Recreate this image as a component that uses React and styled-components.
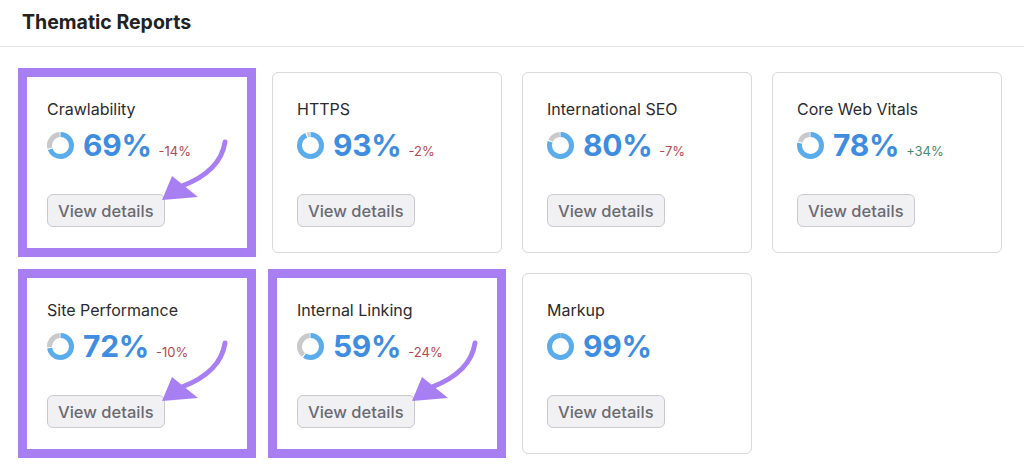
import React from 'react';
import styled, { createGlobalStyle } from 'styled-components';

const GlobalStyle = createGlobalStyle`
  body {
    margin: 0;
    background: #fff;
    font-family: Inter, "Noto Sans", "Liberation Sans", sans-serif;
  }
`;

const Page = styled.div`
  width: 1024px;
  height: 473px;
  overflow: hidden;
  background: #fff;
`;

const Header = styled.div`
  height: 46px;
  display: flex;
  align-items: center;
  padding: 0 22px;
  border-bottom: 1px solid #e3e3e6;
`;

const Title = styled.h1`
  margin: 0;
  margin-top: -2px;
  font-size: 19.5px;
  font-weight: 700;
  color: #222;
`;

const Grid = styled.div`
  display: grid;
  grid-template-columns: repeat(4, 230px);
  grid-auto-rows: 181px;
  gap: 20px;
  padding: 25px 22px 0;
`;

const Card = styled.div`
  position: relative;
  box-sizing: border-box;
  border: 1px solid #d9d9de;
  border-radius: ${p => (p.$highlight ? '0' : '6px')};
  padding: 26px 24px 24px;
  display: flex;
  flex-direction: column;
  align-items: flex-start;
  background: #fff;
  ${p => p.$highlight && `
    border-color: #a87ff2;
    outline: 9px solid #a87ff2;
    outline-offset: -5px;
  `}
`;

const CardTitle = styled.div`
  font-size: 16px;
  line-height: 20px;
  color: #2b2b2f;
`;

const ScoreRow = styled.div`
  display: flex;
  align-items: baseline;
  margin-top: 8px;
  height: 36px;
`;

const Donut = styled.svg`
  flex: none;
  align-self: center;
  margin-right: 9px;
`;

const Score = styled.span`
  font-size: 30px;
  line-height: 36px;
  font-weight: 700;
  color: #3e8de0;
  letter-spacing: -0.3px;
`;

const Change = styled.span`
  margin-left: 7px;
  font-size: 13px;
  color: ${p => (p.$up ? '#4b8a6f' : '#b9474f')};
`;

const DetailsButton = styled.button`
  margin-top: 31px;
  height: 33px;
  padding: 0 10px;
  border: 1px solid #cacad0;
  border-radius: 6px;
  background: #f1f1f4;
  color: #6a6a72;
  font-family: inherit;
  font-size: 16.5px;
  font-weight: 500;
  cursor: pointer;
`;

const Arrow = styled.svg`
  position: absolute;
  left: -1px;
  top: -1px;
  overflow: visible;
  pointer-events: none;
`;

const ScoreDonut = ({ value }) => {
  const r = 11;
  const c = 2 * Math.PI * r;
  const gap = 1.2;
  const blue = (value / 100) * c;
  return (
    <Donut width="27" height="27" viewBox="0 0 27 27">
      <g transform="rotate(-90 13.5 13.5)">
        <circle
          cx="13.5" cy="13.5" r={r} fill="none" stroke="#c9c9cc" strokeWidth="5"
          strokeDasharray={`${Math.max(c - blue - gap * 2, 0.5)} ${c}`}
          strokeDashoffset={-(blue + gap)}
        />
        <circle
          cx="13.5" cy="13.5" r={r} fill="none" stroke="#5aadea" strokeWidth="5"
          strokeDasharray={`${blue} ${c}`}
        />
      </g>
    </Donut>
  );
};

const PointerArrow = () => (
  <Arrow width="230" height="181" viewBox="0 0 230 181">
    <path d="M203 70 C200 90 186 104 160 114" fill="none" stroke="#a87ff2" strokeWidth="5" strokeLinecap="round" />
    <polygon points="140,128 150,104 176,125" fill="#a87ff2" />
  </Arrow>
);

const reports = [
  { id: 1, name: 'Crawlability', score: 69, change: '-14%', highlight: true },
  { id: 2, name: 'HTTPS', score: 93, change: '-2%' },
  { id: 3, name: 'International SEO', score: 80, change: '-7%' },
  { id: 4, name: 'Core Web Vitals', score: 78, change: '+34%', up: true },
  { id: 5, name: 'Site Performance', score: 72, change: '-10%', highlight: true },
  { id: 6, name: 'Internal Linking', score: 59, change: '-24%', highlight: true },
  { id: 7, name: 'Markup', score: 99 },
];

const App = () => (
  <Page>
    <GlobalStyle />
    <Header>
      <Title>Thematic Reports</Title>
    </Header>
    <Grid>
      {reports.map(r => (
        <Card key={r.id} $highlight={r.highlight}>
          <CardTitle>{r.name}</CardTitle>
          <ScoreRow>
            <ScoreDonut value={r.score} />
            <Score>{r.score}%</Score>
            {r.change && <Change $up={r.up}>{r.change}</Change>}
          </ScoreRow>
          <DetailsButton>View details</DetailsButton>
          {r.highlight && <PointerArrow />}
        </Card>
      ))}
    </Grid>
  </Page>
);

export default App;
